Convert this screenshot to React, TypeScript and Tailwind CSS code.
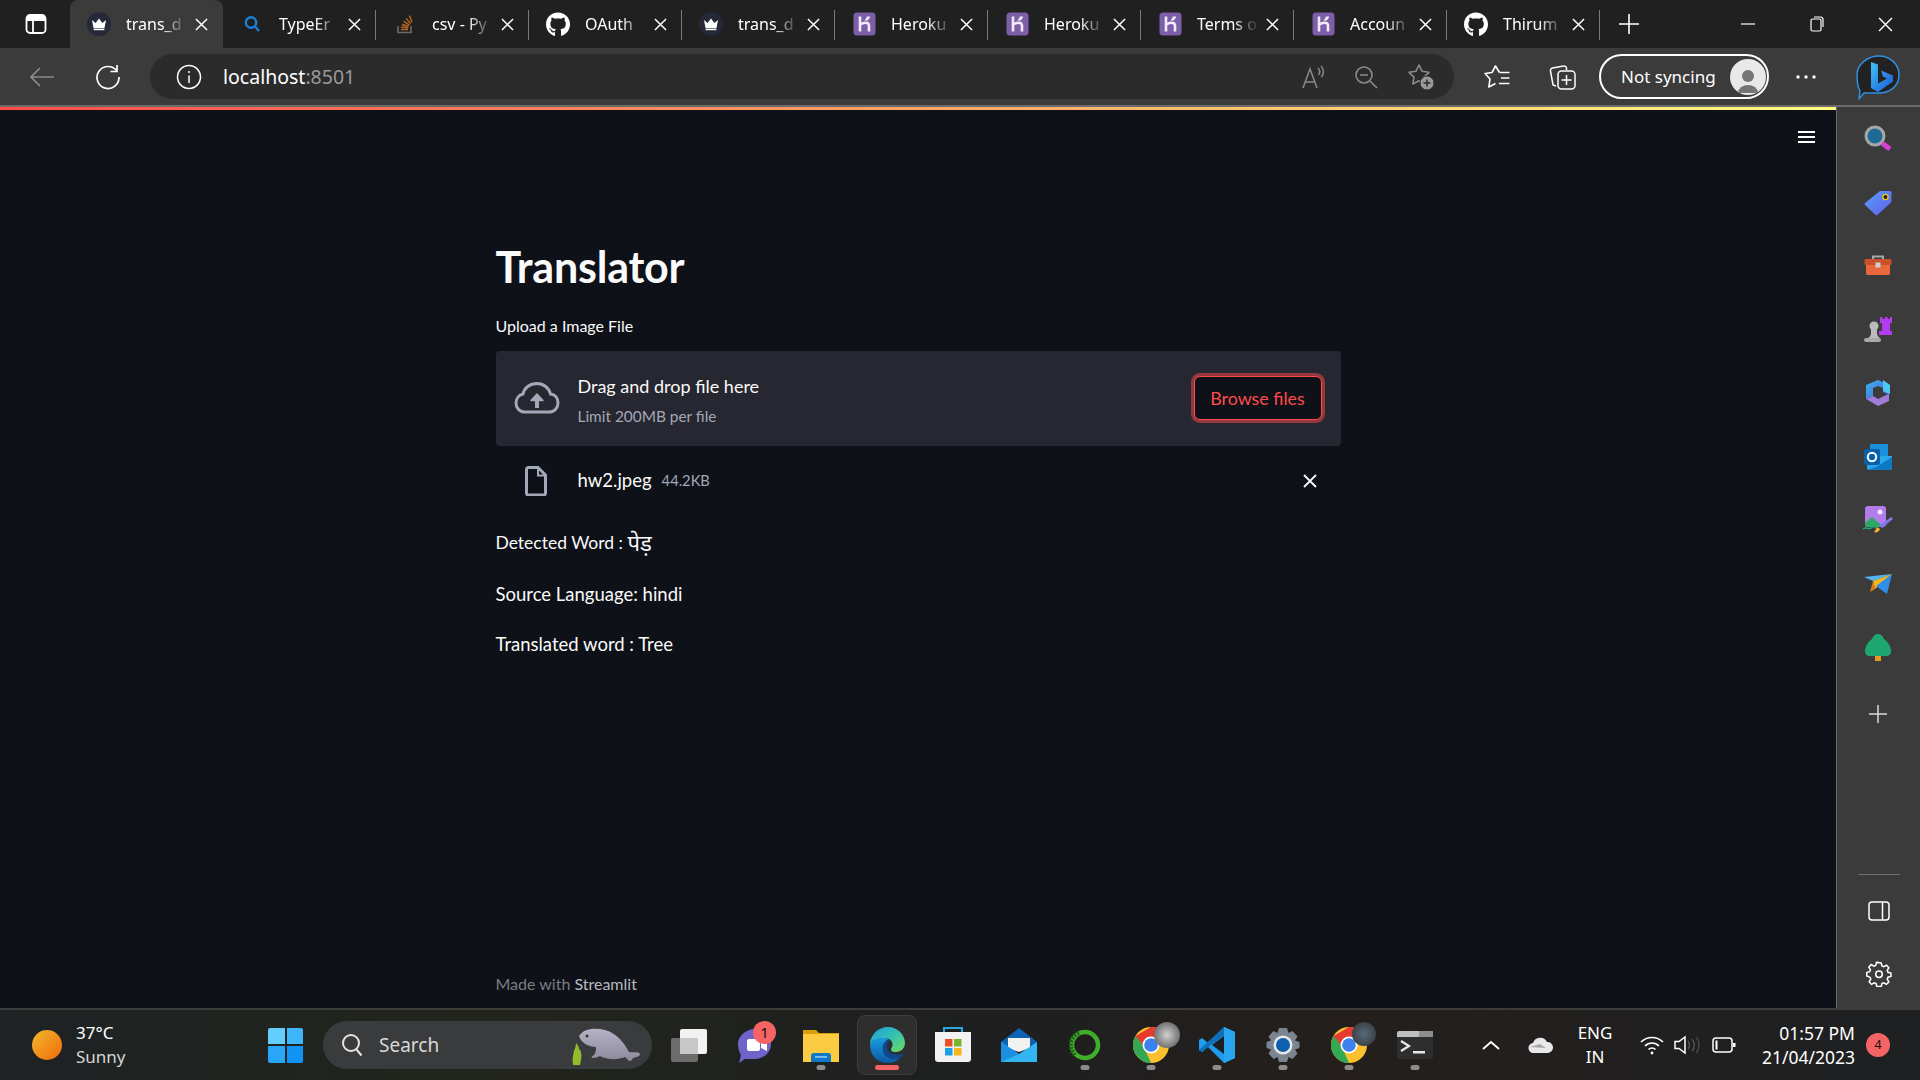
import { FaGithub } from "react-icons/fa";
import { ReactNode } from "react";

const segoe = "font-['Noto_Sans','Open_Sans',sans-serif]";
const source = "font-['Lato','Noto_Sans','Noto_Sans_Devanagari',sans-serif]";

const CrownIcon = () => (
  <svg width="24" height="24" viewBox="0 0 24 24">
    <circle cx="12" cy="12" r="12" fill="#252838" />
    <path d="M5 8l3.6 3L12 6.500 15.400 11 19 8l-1.500 8h-11z" fill="#fff" />
    <rect x="6.600" y="16.600" width="10.800" height="1.600" fill="#fff" />
  </svg>
);

const SearchTabIcon = () => (
  <svg width="24" height="24" viewBox="0 0 24 24" fill="none" stroke="#1a7fd6" strokeWidth="2.400">
    <circle cx="11" cy="10.500" r="5.200" />
    <path d="M15 14.500l4 4.500" />
  </svg>
);

const StackIcon = () => (
  <svg width="24" height="24" viewBox="0 0 24 24" fill="none">
    <path d="M5 14v6.500h13V14" stroke="#6d6a62" strokeWidth="1.600" />
    <path d="M8 17.500h7M8.200 15l7 .7M9 12.400l6.800 1.800M10.600 9.400l6 3.400M13 6.400l4.800 5M16.400 3.600l2.600 6.400" stroke="#b5651d" strokeWidth="1.500" />
  </svg>
);

const GithubIcon = () => <FaGithub size={25} color="#fff" />;

const HerokuIcon = () => (
  <svg width="23" height="24" viewBox="0 0 23 24">
    <rect x="0.500" y="0.500" width="22" height="23" rx="3.500" fill="#7c5fa8" />
    <path d="M7 4.500v15" fill="none" stroke="#f1ebf8" strokeWidth="2.600" />
    <path d="M7 12.500c3-1.800 5.500-2 7.200-1.400 1.400.5 1.800 1.600 1.800 3v5.400" fill="none" stroke="#f1ebf8" strokeWidth="2.600" />
    <path d="M13.800 4.500h3.400c-.5 1.600-1.300 2.800-2.600 4H11.400c1.200-1.200 2-2.400 2.400-4z" fill="#f1ebf8" />
  </svg>
);

const CloseGlyph = ({ size = 14, color = "#fff", width = 1.500 }: { size?: number; color?: string; width?: number }) => (
  <svg width={size} height={size} viewBox="0 0 14 14" fill="none" stroke={color} strokeWidth={width}>
    <path d="M1 1l12 12M13 1L1 13" />
  </svg>
);

const tabs: { title: string; icon: ReactNode; active?: boolean; sep?: boolean }[] = [
  { title: "trans_d", icon: <CrownIcon />, active: true },
  { title: "TypeEr", icon: <SearchTabIcon />, sep: true },
  { title: "csv - Py", icon: <StackIcon />, sep: true },
  { title: "OAuth", icon: <GithubIcon />, sep: true },
  { title: "trans_d", icon: <CrownIcon />, sep: true },
  { title: "Heroku", icon: <HerokuIcon />, sep: true },
  { title: "Heroku", icon: <HerokuIcon />, sep: true },
  { title: "Terms o", icon: <HerokuIcon />, sep: true },
  { title: "Accoun", icon: <HerokuIcon />, sep: true },
  { title: "Thirum", icon: <GithubIcon />, sep: true },
];

const TabStrip = () => (
  <div className={`flex h-12 shrink-0 items-end bg-[#202020] ${segoe}`}>
    <div className="flex h-12 w-[70px] items-center justify-center pl-[2px]">
      <svg width="22" height="22" viewBox="0 0 22 22" fill="none" stroke="#fff" strokeWidth="1.800">
        <rect x="1.500" y="2" width="19" height="18" rx="3.500" />
        <path d="M2 7h18M8 7v13" />
        <rect x="2" y="2.500" width="18" height="4.500" fill="#fff" stroke="none" />
      </svg>
    </div>
    {tabs.map((tab, i) => (
      <div
        key={i}
        className={`relative flex h-12 w-[153px] shrink-0 items-center rounded-t-lg pl-[17px] ${tab.active ? "bg-[#3b3b3b]" : ""}`}
      >
        <div className="flex w-6 justify-center">{tab.icon}</div>
        <div className="ml-[15px] w-[60px] overflow-hidden whitespace-nowrap text-[16px] text-white [mask-image:linear-gradient(90deg,#000_60%,rgba(0,0,0,0.15)_95%)]">
          {tab.title}
        </div>
        <div className="ml-[9px] flex">
          <CloseGlyph size={13} width={1.600} />
        </div>
        {tab.sep && <div className="absolute right-0 top-[10px] h-[30px] w-px bg-[#7a7a7a]" />}
      </div>
    ))}
    <div className="flex h-12 w-[58px] items-center justify-center">
      <svg width="22" height="22" viewBox="0 0 22 22" stroke="#fff" strokeWidth="1.600">
        <path d="M11 1v20M1 11h20" />
      </svg>
    </div>
    <div className="ml-auto flex h-12 items-center">
      <div className="flex w-[69px] justify-center">
        <svg width="14" height="2" viewBox="0 0 14 2" stroke="#fff" strokeWidth="1.200"><path d="M0 1h14" /></svg>
      </div>
      <div className="flex w-[69px] justify-center">
        <svg width="14" height="16" viewBox="0 0 14 16" fill="none" stroke="#fff" strokeWidth="1.200">
          <rect x="1" y="3" width="10" height="12" rx="1.500" />
          <path d="M4 1h6.500A2.500 2.500 0 0 1 13 3.500V11" />
        </svg>
      </div>
      <div className="flex w-[69px] justify-center">
        <CloseGlyph size={15} width={1.300} />
      </div>
    </div>
  </div>
);

const Toolbar = () => (
  <div className={`flex h-[57px] shrink-0 items-center bg-[#3b3b3b] ${segoe}`}>
    <div className="flex w-[84px] justify-center">
      <svg width="26" height="22" viewBox="0 0 26 22" fill="none" stroke="#8b8b8b" strokeWidth="1.700">
        <path d="M25 11H2M11 2l-9 9 9 9" />
      </svg>
    </div>
    <div className="flex w-[48px] justify-center">
      <svg width="26" height="26" viewBox="0 0 26 26" fill="none" stroke="#fff" strokeWidth="1.700">
        <path d="M21.500 6.500A11 11 0 1 0 24 13" />
        <path d="M22 1v6.500h-6.500" />
      </svg>
    </div>
    <div className="ml-[18px] flex h-[45px] w-[1304px] items-center rounded-full bg-[#2b2b2b]">
      <div className="ml-[26px] flex">
        <svg width="26" height="26" viewBox="0 0 26 26" fill="none" stroke="#fff" strokeWidth="1.500">
          <circle cx="13" cy="13" r="11.500" />
          <path d="M13 11.500v7.500M13 7v2" />
        </svg>
      </div>
      <div className="ml-[21px] text-[19.500px] text-white">
        localhost<span className="text-[#9a9a9a]">:8501</span>
      </div>
      <div className="ml-auto flex items-center">
        <svg width="26" height="26" viewBox="0 0 26 26" fill="none" stroke="#8a8a8a" strokeWidth="1.500">
          <path d="M2 24L9 5l7 19M4.500 18h9" />
          <path d="M17 4c2 2 2 5 .5 7M20 2c3 3 3 8 .5 11" />
        </svg>
        <svg className="ml-[27px]" width="24" height="24" viewBox="0 0 24 24" fill="none" stroke="#8a8a8a" strokeWidth="1.600">
          <circle cx="10" cy="10" r="8" />
          <path d="M6 10h8M16 16l7 7" />
        </svg>
        <svg className="ml-[29px]" width="28" height="28" viewBox="0 0 28 28" fill="none">
          <path d="M12 2l3.100 6.300L22 9.300l-5 4.800 1.200 6.900-6.200-3.200L5.800 21 7 14.100 2 9.300l6.900-1z" stroke="#8a8a8a" strokeWidth="1.600" strokeLinejoin="round" />
          <circle cx="20" cy="20" r="7" fill="#9a9a9a" stroke="#2b2b2b" strokeWidth="1" />
          <path d="M20 16.500v7M16.500 20h7" stroke="#2b2b2b" strokeWidth="1.500" />
        </svg>
        <div className="w-[19px]" />
      </div>
    </div>
    <div className="ml-[29px] flex">
      <svg width="28" height="26" viewBox="0 0 28 26" fill="none" stroke="#fff" strokeWidth="1.600" strokeLinejoin="round">
        <path d="M16.500 8.500L12.500 2 9 8.500 2 9.500l5 5.500L5.800 23l6.700-3.500" />
        <path d="M16.500 8.500h10M18 14h8.500M16 19.500h10.500" />
      </svg>
    </div>
    <div className="ml-[38px] flex">
      <svg width="28" height="28" viewBox="0 0 28 28" fill="none" stroke="#fff" strokeWidth="1.500">
        <path d="M7 23l-3-1L1.500 8A2.500 2.500 0 0 1 3.500 5l11-2a2.500 2.500 0 0 1 3 2v2" />
        <rect x="9" y="8" width="17" height="18" rx="3.500" />
        <path d="M17.500 12v10M12.500 17h10" />
      </svg>
    </div>
    <div className="ml-[22px] flex h-[45px] w-[170px] items-center rounded-full border-2 border-white pl-[20px]">
      <span className="whitespace-nowrap text-[17px] text-white">Not syncing</span>
      <div className="ml-auto mr-[1px] flex h-9 w-9 items-end justify-center overflow-hidden rounded-full bg-[#e9e9e9]">
        <svg width="24" height="30" viewBox="0 0 24 30">
          <circle cx="12" cy="11" r="6" fill="#757575" />
          <path d="M2 28a10 8 0 0 1 20 0z" fill="#757575" />
        </svg>
      </div>
    </div>
    <div className="flex w-[73px] justify-center">
      <svg width="20" height="4" viewBox="0 0 20 4" fill="#fff">
        <circle cx="2" cy="2" r="1.700" />
        <circle cx="10" cy="2" r="1.700" />
        <circle cx="18" cy="2" r="1.700" />
      </svg>
    </div>
    <div className="flex w-[73px] justify-center">
      <svg width="46" height="46" viewBox="0 0 46 46">
        <defs>
          <linearGradient id="bingFill" x1="0" y1="0" x2="1" y2="1">
            <stop offset="0" stopColor="#3fc4f5" />
            <stop offset="1" stopColor="#1b56d6" />
          </linearGradient>
        </defs>
        <path d="M23 2c11 0 20 8 20 19 0 11-9 18-20 18H8l-5 6 1-8C1 32 1 27 1 21 1 10 12 2 23 2z" fill="#222" stroke="#2f8fe0" strokeWidth="1.500" />
        <path d="M15 8l7 2.500v19l9-5-4-2-2-6 12 5v6L22 38l-7-4z" fill="url(#bingFill)" />
      </svg>
    </div>
  </div>
);

const SidebarIcons: ReactNode[] = [
  <svg key="s" width="30" height="30" viewBox="0 0 30 30" fill="none">
    <circle cx="12" cy="12" r="9" fill="#1d6a94" stroke="#a7a7a7" strokeWidth="3" />
    <path d="M19 19l8 6" stroke="#d63fd1" strokeWidth="5" />
  </svg>,
  <svg key="t" width="30" height="30" viewBox="0 0 30 30">
    <defs>
      <linearGradient id="tagFill" x1="0" y1="0" x2="1" y2="1">
        <stop offset="0" stopColor="#5aa0f2" />
        <stop offset="1" stopColor="#5f5cf0" />
      </linearGradient>
    </defs>
    <path d="M17 3h10a1.500 1.500 0 0 1 1.500 1.500V14l-14 13a1.500 1.500 0 0 1-2 0L2 17a1.500 1.500 0 0 1 0-2z" fill="url(#tagFill)" />
    <circle cx="22.500" cy="9" r="2.600" fill="#222" stroke="#f0c419" strokeWidth="1.400" />
  </svg>,
  <svg key="b" width="30" height="30" viewBox="0 0 30 30" fill="none">
    <path d="M10 8V5.500h10V8" stroke="#a8a8a8" strokeWidth="2" />
    <rect x="3" y="12" width="24" height="12" rx="1.500" fill="#e8683a" />
    <rect x="1.500" y="8" width="27" height="6" rx="1" fill="#c9502a" />
    <rect x="12.500" y="11.500" width="5" height="5" fill="#cfcfcf" />
  </svg>,
  <svg key="c" width="30" height="30" viewBox="0 0 30 30">
    <circle cx="11" cy="11" r="4.500" fill="#bcbcbc" />
    <path d="M8 15h6v3c0 2 1 4 3 5H5c2-1 3-3 3-5z" fill="#bcbcbc" />
    <rect x="1" y="23" width="17" height="4" rx="2" fill="#a8a8a8" />
    <path d="M17 2h2.500v2H22V2h2.500v2H27V2h2v6h-2v8h2v4H16v-4h3V8h-2z" fill="#b33cf0" />
  </svg>,
  <svg key="o" width="30" height="30" viewBox="0 0 30 30" fill="none">
    <defs>
      <linearGradient id="officeA" x1="0" y1="0" x2="1" y2="1">
        <stop offset="0" stopColor="#3bb3ea" />
        <stop offset="1" stopColor="#4b63d9" />
      </linearGradient>
    </defs>
    <path d="M15 2l11 5v10l-6-3v-4l-5-2-5 2v8l-7 3V7z" fill="url(#officeA)" />
    <path d="M3 21l7-3 5 3 6-3 5-2v7l-11 5z" fill="#a07bd8" />
    <path d="M20 2l7 5v9l-7-3z" fill="#52c6f2" />
  </svg>,
  <svg key="m" width="30" height="30" viewBox="0 0 30 30">
    <rect x="7" y="2" width="18" height="18" rx="1" fill="#1a90dc" />
    <path d="M4 14h25v12a2 2 0 0 1-2 2H6a2 2 0 0 1-2-2z" fill="#28a8ea" />
    <path d="M29 15L15 24 5 28h22a2 2 0 0 0 2-2z" fill="#0f78c4" />
    <rect x="1" y="7" width="16" height="16" rx="2" fill="#0a5fa8" />
    <circle cx="9" cy="15" r="4.200" fill="none" stroke="#fff" strokeWidth="2" />
  </svg>,
  <svg key="d" width="32" height="30" viewBox="0 0 32 30">
    <rect x="3" y="1" width="21" height="21" rx="3" fill="#b27ceb" />
    <circle cx="18" cy="7" r="2.500" fill="#f5e4ff" />
    <path d="M3 18l7-6 8 7 3 3H5a2 2 0 0 1-2-2z" fill="#2fa866" />
    <path d="M1 24c3-3 5 1 8-1s3-2 5 0" fill="none" stroke="#1ea86a" strokeWidth="1.500" />
    <path d="M29 12l2 2-11 9-3-2z" fill="#7d79e8" />
    <path d="M15 22l3 2c-1 3-4 4-6 3 1-1 2-3 3-5z" fill="#f1b12c" />
  </svg>,
  <svg key="p" width="30" height="30" viewBox="0 0 30 30">
    <path d="M1 8l28-3-19 7z" fill="#4fb6f2" />
    <path d="M29 5L10 12l2 8z" fill="#f4b81f" />
    <path d="M29 5L13 17l11 8z" fill="#2f8fe6" />
    <path d="M10 12l-3 11 5-3z" fill="#d87f1a" />
  </svg>,
  <svg key="e" width="30" height="30" viewBox="0 0 30 30">
    <rect x="12" y="22" width="6" height="7" fill="#e8971f" />
    <path d="M15 2c3 0 5 2 6 5 3 2 7 7 7 12 0 3-2 5-5 5H7c-3 0-5-2-5-5 0-5 4-10 7-12 1-3 3-5 6-5z" fill="#1fa772" />
  </svg>,
  <svg key="a" className="mt-[6px]" width="20" height="20" viewBox="0 0 20 20" stroke="#dcdcdc" strokeWidth="1.500">
    <path d="M10 1v18M1 10h18" />
  </svg>,
];

const Sidebar = () => (
  <div className="flex w-[84px] shrink-0 flex-col items-center border-l border-l-[#6a6a6a] bg-[#3b3b3b] pt-[1px]">
    {SidebarIcons.map((icon, i) => (
      <div key={i} className="flex h-[63.500px] w-full items-center justify-center pr-px">
        {icon}
      </div>
    ))}
    <div className="mt-auto mb-[4px] h-px w-[42px] bg-[#6f6f6f]" />
    <div className="flex h-[63px] items-center justify-center">
      <svg width="22" height="20" viewBox="0 0 22 20" fill="none" stroke="#fff" strokeWidth="1.500">
        <rect x="1" y="1" width="20" height="18" rx="3" />
        <path d="M14.500 1v18" />
      </svg>
    </div>
    <div className="mb-[3px] flex h-[63px] items-center justify-center">
      <svg width="26" height="26" viewBox="0 0 24 24" fill="none" stroke="#fff" strokeWidth="1.400">
        <path d="M12 1.500l2 .3.700 2.800 1.700.7 2.500-1.500 2.200 2.400-1.500 2.400.7 1.800 2.700.7v3.200l-2.700.7-.7 1.800 1.500 2.400-2.200 2.400-2.500-1.500-1.700.7-.7 2.800h-4l-.7-2.800-1.700-.7-2.500 1.500-2.200-2.400 1.500-2.400-.7-1.800L.7 13.800v-3.200l2.700-.7.700-1.800L2.600 5.700l2.200-2.400 2.500 1.500L9 4.100l.7-2.800z" />
        <circle cx="12" cy="12.200" r="3" />
      </svg>
    </div>
  </div>
);

const MainArea = () => (
  <main className={`relative flex min-w-0 flex-1 flex-col bg-[#0e1117] text-[#fafafa] ${source}`}>
    <div className="absolute right-[21px] top-[21px] flex flex-col gap-[3px]">
      <div className="h-[2px] w-[17px] bg-white" />
      <div className="h-[2px] w-[17px] bg-white" />
      <div className="h-[2px] w-[17px] bg-white" />
    </div>
    <div className="mx-auto flex w-[845px] flex-1 flex-col">
      <h1 className="mt-[129px] text-[43px] font-bold leading-[56px] tracking-[-0.2px]">Translator</h1>
      <div className="mt-[21px] text-[16px] leading-5">Upload a Image File</div>
      <div className="mt-[15px] flex h-[95px] items-center rounded-[4px] bg-[#262730] pl-[18px] pr-[19px]">
        <svg width="46" height="32" viewBox="0 0 46 32" fill="none" stroke="#a3a8b8" strokeWidth="3">
          <path d="M13 30H11C5.500 30 2 26 2 21c0-4.500 3-8 7-9 1-6 7-10.500 14-10.500 6.500 0 12 4.500 13.500 10.500C41 12.500 44 16 44 21c0 5-3.500 9-9 9z" />
          <path d="M23 26V13M17 18.500l6-6.500 6 6.500z" fill="#a3a8b8" strokeLinejoin="round" strokeWidth="1.500" />
          <path d="M23 26V16" strokeWidth="4" />
        </svg>
        <div className="ml-[18px] pt-[3px]">
          <div className="text-[18px] leading-[24px]">Drag and drop file here</div>
          <div className="mt-[8px] text-[15.400px] leading-[20px] text-[#a3a8b8]">Limit 200MB per file</div>
        </div>
        <div className="ml-auto flex h-[44px] w-[128px] items-center justify-center rounded-[6px] border border-[#ff4b4b] bg-[#0e1117] text-[17.800px] text-[#ff4b4b] shadow-[0_0_0_3px_rgba(255,75,75,0.5)]">
          Browse files
        </div>
      </div>
      <div className="mt-[13px] flex h-[44px] items-center pl-[27px]">
        <svg width="26" height="30" viewBox="0 0 26 30" fill="none" stroke="#a3a8b8" strokeWidth="3">
          <path d="M3.500 3.500A2 2 0 0 1 5.500 1.500H15L22.500 9v18a2 2 0 0 1-2 2h-15a2 2 0 0 1-2-2z" />
          <path d="M15 2v7.500h7" strokeWidth="2" />
        </svg>
        <span className="ml-[29px] text-[18.500px]">hw2.jpeg</span>
        <span className="ml-[10px] text-[14.700px] text-[#a3a8b8]">44.2KB</span>
        <div className="ml-auto mr-[24px] flex">
          <CloseGlyph size={14} color="#fafafa" width={1.800} />
        </div>
      </div>
      <div className="mt-[27px] flex h-[28px] items-center text-[17.500px]">
        Detected Word :&nbsp;<span className="-mt-[3px] text-[22px]">पेड़</span>
      </div>
      <div className="mt-[22px] h-[28px] text-[18.500px] leading-[28px]">Source Language: hindi</div>
      <div className="mt-[22px] h-[28px] text-[18.500px] leading-[28px]">Translated word : Tree</div>
      <div className="mt-auto pb-[14px] text-[16px] leading-5 text-[#7b7d84]">
        Made with <span className="text-[#b9bbc0]">Streamlit</span>
      </div>
    </div>
  </main>
);

const Dot = ({ active }: { active?: boolean }) => (
  <div className={`absolute bottom-[5px] left-1/2 h-[5px] -translate-x-1/2 rounded-full ${active ? "w-6 bg-[#f56464]" : "w-[9px] bg-[#8c8c8c]"}`} />
);

const ChromeIcon = ({ id }: { id: string }) => (
  <svg width="36" height="36" viewBox="0 0 36 36">
    <defs>
      <clipPath id={id}>
        <circle cx="18" cy="18" r="18" />
      </clipPath>
    </defs>
    <g clipPath={`url(#${id})`}>
      <rect width="36" height="36" fill="#fbc02d" />
      <path d="M18 0h18v11H18L8 28-6 14z" fill="#e53a2f" />
      <path d="M0 6l10 12 8 18H0z" fill="#34a853" />
      <path d="M8 20l8 16h-6z" fill="#34a853" />
    </g>
    <circle cx="18" cy="18" r="8.500" fill="#fff" />
    <circle cx="18" cy="18" r="6.800" fill="#3d80f0" />
  </svg>
);

const apps: { key: string; icon: ReactNode; dot?: boolean; active?: boolean; extra?: ReactNode }[] = [
  {
    key: "teams",
    extra: (
      <div className={`absolute left-[31px] top-[6px] flex h-[23px] w-[23px] items-center justify-center rounded-full bg-[#f56464] text-[15px] text-[#201010] ${segoe}`}>1</div>
    ),
    icon: (
      <svg width="36" height="38" viewBox="0 0 36 38">
        <path d="M18 3c9 0 16 7 16 15s-7 15-16 15H8l-6 4 2-8C2 26 1 22 1 18 1 10 9 3 18 3z" fill="#7063c9" />
        <rect x="10" y="13" width="13" height="12" rx="2" fill="#fff" />
        <path d="M24 16l6-3v12l-6-3z" fill="#fff" />
      </svg>
    ),
  },
  {
    key: "files",
    dot: true,
    icon: (
      <svg width="36" height="36" viewBox="0 0 36 36">
        <path d="M0 3h13l3 3h20v10H0z" fill="#d99f0d" />
        <rect y="7" width="36" height="28" fill="#fbcb42" />
        <path d="M8 35V29a3 3 0 0 1 3-3h14a3 3 0 0 1 3 3v6z" fill="#0f78c8" />
        <rect x="12" y="29" width="12" height="1.800" fill="#7cc3ef" />
      </svg>
    ),
  },
  {
    key: "edge",
    active: true,
    icon: (
      <svg width="36" height="38" viewBox="0 0 36 38">
        <defs>
          <linearGradient id="edgeA" x1="0" y1="0" x2="1" y2="1">
            <stop offset="0" stopColor="#1f9ee0" />
            <stop offset="0.500" stopColor="#35c1b0" />
            <stop offset="1" stopColor="#6fdc62" />
          </linearGradient>
          <linearGradient id="edgeB" x1="0" y1="0" x2="0" y2="1">
            <stop offset="0" stopColor="#1a9ce0" />
            <stop offset="1" stopColor="#0c59a4" />
          </linearGradient>
        </defs>
        <path d="M1 19C1 9 9 1 19 1c10 0 17 8 17 16 0 5-4 9-9 9-5 0-6-2-4-5 2-4-1-9-8-9C8 12 2 15 1 19z" fill="url(#edgeA)" />
        <path d="M1 19C1 30 9 37 19 37c5 0 9-2 12-5-7 3-16 0-17-8-1-5 2-9 6-11-8-3-18 0-19 6z" fill="url(#edgeB)" />
        <path d="M14 24c1 8 10 11 17 8 2-2 3-3 4-5-3 2-7 2-11 1-4-1-6-4-6-7 0-3 1-5 3-7l-1-1c-4 2-7 6-6 11z" fill="#0b4a8e" />
      </svg>
    ),
  },
  {
    key: "store",
    icon: (
      <svg width="36" height="38" viewBox="0 0 36 38">
        <path d="M9 7V2h18v5" fill="none" stroke="#29a8e0" strokeWidth="2" />
        <path d="M0 6h36v27a3 3 0 0 1-3 3H3a3 3 0 0 1-3-3z" fill="#f2f2f2" />
        <rect x="10" y="13" width="7.500" height="7.500" fill="#e8512a" />
        <rect x="19" y="13" width="7.500" height="7.500" fill="#77b52a" />
        <rect x="10" y="22" width="7.500" height="7.500" fill="#1aa0e8" />
        <rect x="19" y="22" width="7.500" height="7.500" fill="#f8b51d" />
      </svg>
    ),
  },
  {
    key: "mail",
    icon: (
      <svg width="36" height="34" viewBox="0 0 36 34">
        <path d="M0 14L18 0l18 14v4H0z" fill="#0d62b3" />
        <path d="M7 10h22v10L18 24 7 20z" fill="#f2f2f2" />
        <path d="M0 14l18 12 18-12v20H0z" fill="#33b5f0" />
        <path d="M0 34V14l18 12z" fill="#1b8ee0" />
      </svg>
    ),
  },
  {
    key: "ring",
    dot: true,
    icon: (
      <svg width="32" height="34" viewBox="0 0 32 34" fill="none">
        <circle cx="16" cy="17" r="13" stroke="#3fae2a" strokeWidth="4.500" />
        <path d="M10 5A13 13 0 0 0 6 27" stroke="#1e5d18" strokeWidth="4.500" strokeDasharray="2 1.500" />
      </svg>
    ),
  },
  {
    key: "chrome1",
    dot: true,
    icon: <ChromeIcon id="chromeClipA" />,
    extra: <div className="absolute left-[36px] top-[7px] h-[26px] w-[26px] rounded-full bg-[radial-gradient(circle,#d0d0d0,#4a4a4a)]" />,
  },
  {
    key: "code",
    dot: true,
    icon: (
      <svg width="36" height="36" viewBox="0 0 36 36">
        <path d="M25 0l11 5v26l-11 5L9 20l-6 5-3-2v-10l3-2 6 5z" fill="#1f9cf0" />
        <path d="M25 9v18L13 18z" fill="#1c1f22" />
        <path d="M25 0v36l11-5V5z" fill="#29a5f0" />
        <path d="M0 23l25-23v9L9 20l-6 5z" fill="#0f70b7" />
      </svg>
    ),
  },
  {
    key: "settings",
    dot: true,
    icon: (
      <svg width="36" height="36" viewBox="0 0 36 36">
        <path d="M14 1h8l1.500 5 4-2 5 5.500-2.500 4 4.500 1.500v6l-4.500 1.500 2.500 4-5 5.500-4-2L22 35h-8l-1.500-5-4 2-5-5.500 2.500-4L1.500 21v-6L6 13.500l-2.500-4 5-5.500 4 2z" fill="#7a8590" />
        <circle cx="18" cy="18" r="9.500" fill="#e8e8e8" />
        <circle cx="18" cy="18" r="7" fill="#0d5fb0" />
      </svg>
    ),
  },
  {
    key: "chrome2",
    dot: true,
    icon: <ChromeIcon id="chromeClipB" />,
    extra: <div className="absolute left-[36px] top-[7px] h-[24px] w-[24px] rounded-full bg-[radial-gradient(circle,#5a6a78,#2d3238)]" />,
  },
  {
    key: "term",
    dot: true,
    icon: (
      <svg width="36" height="28" viewBox="0 0 36 28">
        <rect width="36" height="28" rx="2" fill="#2e2e2e" />
        <path d="M0 2a2 2 0 0 1 2-2h22v6H0z" fill="#bfbfbf" />
        <rect x="22" width="14" height="6" fill="#8e8e8e" />
        <path d="M4 10l8 5-8 5" fill="none" stroke="#e8e8e8" strokeWidth="2.200" />
        <rect x="16" y="20" width="12" height="2.500" fill="#e8e8e8" />
      </svg>
    ),
  },
];

const Taskbar = () => (
  <footer className={`flex h-[72px] shrink-0 items-center border-t-2 border-t-[#3c3c3a] bg-[linear-gradient(90deg,#1e2224,#22251c_25%,#1e1f20_50%,#241f1c_70%,#1e2022)] text-white ${segoe}`}>
    <div className="ml-[32px] h-[30px] w-[30px] rounded-full bg-[linear-gradient(135deg,#f2b92c,#f26a0a)]" />
    <div className="ml-[14px] w-[170px] text-[17px] leading-[24px]">
      <div>37°C</div>
      <div className="text-[#d6d6d6]">Sunny</div>
    </div>
    <div className="ml-[22px] grid h-[35px] w-[35px] grid-cols-2 gap-[2px]">
      <div className="rounded-tl-[2px] bg-[#63cdfb]" />
      <div className="rounded-tr-[2px] bg-[#3fb6fb]" />
      <div className="rounded-bl-[2px] bg-[#2aa6f8]" />
      <div className="rounded-br-[2px] bg-[#0f94f5]" />
    </div>
    <div className="ml-[20px] flex h-[48px] w-[329px] items-center rounded-full bg-[#3a3b3c] pl-[18px]">
      <svg width="22" height="24" viewBox="0 0 22 24" fill="none" stroke="#e4e4e4" strokeWidth="2">
        <circle cx="10" cy="10" r="8" />
        <path d="M15.500 16.500l5 6" />
      </svg>
      <span className="ml-[16px] text-[19px] text-[#d8d8d8]">Search</span>
      <svg className="ml-auto mr-[10px]" width="70" height="42" viewBox="0 0 70 42">
        <defs>
          <linearGradient id="manateeFill" x1="0" y1="0" x2="0" y2="1">
            <stop offset="0" stopColor="#b6b2c6" />
            <stop offset="1" stopColor="#8d8a9c" />
          </linearGradient>
        </defs>
        <path d="M1 41c-1-5 0-10 1-14 1-3 2-5 2-8 2 2 3 4 3 6 1 1 2 2 2 3 1 4 0 9-1 13z" fill="#93ba2c" />
        <path d="M7 12C11 5 22 3 33 6c11 3 18 11 24 22 3 1 9-1 11 2 0 3-5 3-7 4-1 2-2 3-3 3-2 0-3-3-5-4-7 3-18 3-25-1-2 1-5 2-8 2-1-1 0-2 2-3 2-3 2-6 2-8-7 0-15-4-17-11z" fill="url(#manateeFill)" />
        <circle cx="15" cy="12" r="1.500" fill="#333" />
      </svg>
    </div>
    <svg className="ml-[19px]" width="36" height="33" viewBox="0 0 36 33">
      <rect x="9" width="27" height="25" rx="2" fill="#f2f2f2" />
      <rect y="9" width="27" height="24" rx="2" fill="#6c6c6c" />
      <rect x="9" y="9" width="18" height="16" fill="#c8c8c8" />
    </svg>
    <div className="ml-[15px] flex">
      {apps.map((app) => (
        <div key={app.key} className="relative flex h-[60px] w-[66px] items-center justify-center">
          {app.active && <div className="absolute inset-y-0 left-[3px] right-[3px] rounded-lg border border-[#3c3c3c] bg-[#2e2e2e]" />}
          <div className="relative flex">{app.icon}</div>
          {app.extra}
          {(app.dot || app.active) && <Dot active={app.active} />}
        </div>
      ))}
    </div>
    <div className="ml-[34px] flex items-center">
      <svg width="18" height="10" viewBox="0 0 18 10" fill="none" stroke="#fff" strokeWidth="1.800">
        <path d="M1 9l8-7 8 7" />
      </svg>
      <svg className="ml-[28px]" width="26" height="16" viewBox="0 0 26 16">
        <path d="M6 16a5 5 0 0 1-1-10 7.500 7.500 0 0 1 14-1 5.500 5.500 0 0 1 1 11z" fill="#e8e8e8" />
        <path d="M2 10l10-3 6 4z" fill="#a8a8a8" />
      </svg>
      <div className="ml-[17px] w-[48px] text-center text-[17px] leading-[24px]">
        <div>ENG</div>
        <div>IN</div>
      </div>
      <svg className="ml-[21px]" width="24" height="20" viewBox="0 0 24 20" fill="none" stroke="#fff" strokeWidth="1.700">
        <path d="M1 7c6-6 16-6 22 0M5 11c4-4 10-4 14 0M8.500 14.500c2-2 5-2 7 0" />
        <circle cx="12" cy="18" r="1.400" fill="#fff" stroke="none" />
      </svg>
      <svg className="ml-[10px]" width="26" height="20" viewBox="0 0 26 20" fill="none" strokeWidth="1.500">
        <path d="M1 6.500h4L11 2v16l-6-4.500H1z" stroke="#fff" />
        <path d="M14 6c2 2 2 6 0 8M18 4c3 3 3 9 0 12" stroke="#555" />
        <path d="M22 2c4 4 4 12 0 16" stroke="#444" />
      </svg>
      <svg className="ml-[12px]" width="24" height="16" viewBox="0 0 24 16" fill="none" stroke="#fff" strokeWidth="1.500">
        <rect x="1" y="1" width="19" height="14" rx="3" />
        <rect x="3.500" y="3.500" width="2" height="9" fill="#fff" stroke="none" />
        <rect x="21" y="6" width="2.500" height="4" fill="#fff" stroke="none" />
      </svg>
      <div className="ml-[18px] w-[101px] text-right text-[17.500px] leading-[24px]">
        <div>01:57 PM</div>
        <div className="whitespace-nowrap">21/04/2023</div>
      </div>
      <div className="ml-[11px] flex h-6 w-6 items-center justify-center rounded-full bg-[#f56464] text-[13px] text-[#201010]">4</div>
    </div>
  </footer>
);

export default function App() {
  return (
    <div className="flex h-screen w-full flex-col overflow-hidden bg-[#0e1117]">
      <TabStrip />
      <Toolbar />
      <div className="h-[1.500px] shrink-0 bg-[#6b6b6b]" />
      <div className="flex min-h-0 flex-1">
        <div className="flex min-w-0 flex-1 flex-col">
          <div className="h-[3px] shrink-0 bg-[linear-gradient(90deg,#ff4b4b,#fffd80)]" />
          <MainArea />
        </div>
        <Sidebar />
      </div>
      <Taskbar />
    </div>
  );
}
